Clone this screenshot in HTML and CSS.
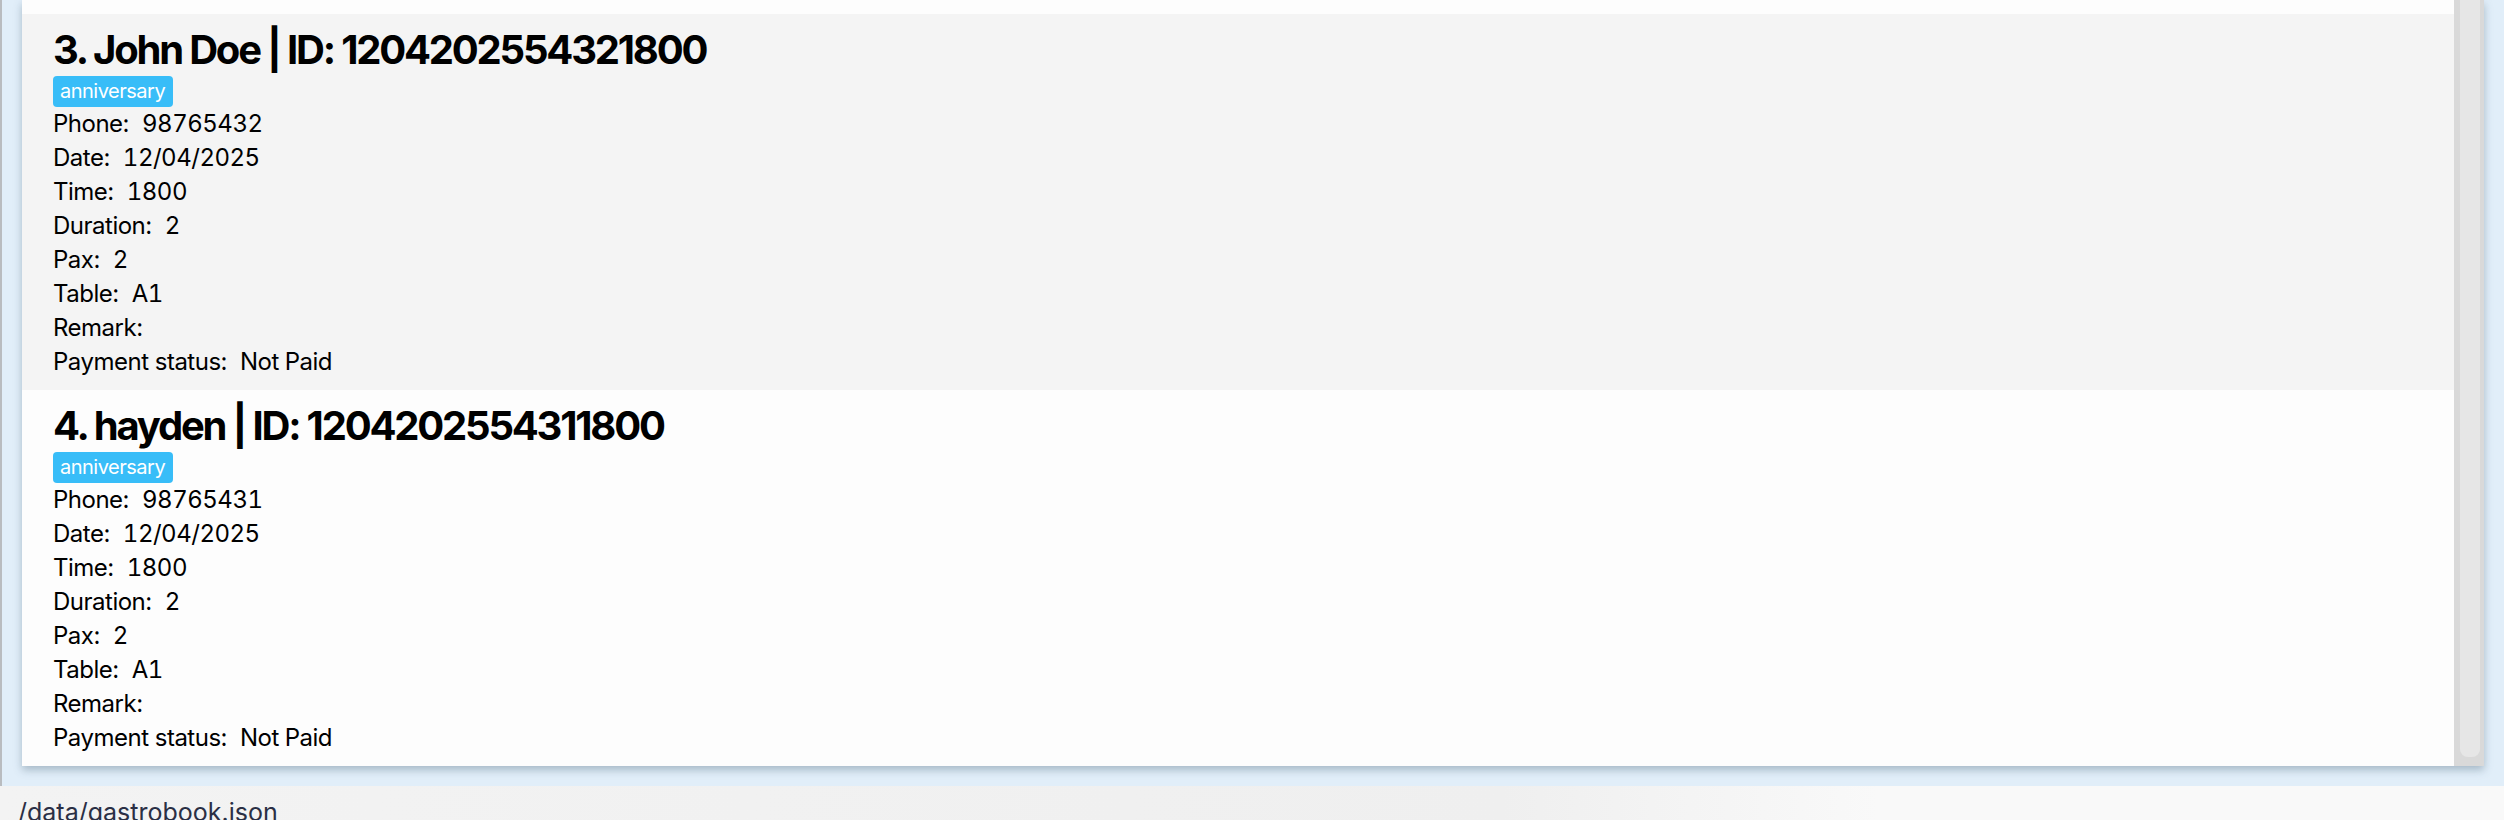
FILE: index.html
```html
<!DOCTYPE html>
<html>
<head>
<meta charset="utf-8">
<link rel="stylesheet" href="styles.css">
</head>
<body>
<div class="app">
  <div class="main">
    <div class="panel">
      <div class="list">
        <div class="card-tail"></div>
        <div class="card card-alt">
          <div class="title">3. John Doe | ID: 1204202554321800</div>
          <div class="tags"><span class="tag">anniversary</span></div>
          <div class="row"><span class="lbl">Phone:</span><span class="val">98765432</span></div>
          <div class="row"><span class="lbl">Date:</span><span class="val">12/04/2025</span></div>
          <div class="row"><span class="lbl">Time:</span><span class="val">1800</span></div>
          <div class="row"><span class="lbl">Duration:</span><span class="val">2</span></div>
          <div class="row"><span class="lbl">Pax:</span><span class="val">2</span></div>
          <div class="row"><span class="lbl">Table:</span><span class="val">A1</span></div>
          <div class="row"><span class="lbl">Remark:</span><span class="val"></span></div>
          <div class="row"><span class="lbl">Payment status:</span><span class="val">Not Paid</span></div>
        </div>
        <div class="card">
          <div class="title">4. hayden | ID: 1204202554311800</div>
          <div class="tags"><span class="tag">anniversary</span></div>
          <div class="row"><span class="lbl">Phone:</span><span class="val">98765431</span></div>
          <div class="row"><span class="lbl">Date:</span><span class="val">12/04/2025</span></div>
          <div class="row"><span class="lbl">Time:</span><span class="val">1800</span></div>
          <div class="row"><span class="lbl">Duration:</span><span class="val">2</span></div>
          <div class="row"><span class="lbl">Pax:</span><span class="val">2</span></div>
          <div class="row"><span class="lbl">Table:</span><span class="val">A1</span></div>
          <div class="row"><span class="lbl">Remark:</span><span class="val"></span></div>
          <div class="row"><span class="lbl">Payment status:</span><span class="val">Not Paid</span></div>
        </div>
      </div>
      <div class="scrollbar"><div class="thumb"></div></div>
    </div>
  </div>
  <div class="status">/data/gastrobook.json</div>
</div>
</body>
</html>
```

FILE: styles.css
```css
html, body {
  margin: 0;
  padding: 0;
}
body {
  width: 2504px;
  height: 820px;
  overflow: hidden;
  font-family: Inter, "Noto Sans", sans-serif;
  color: #000;
}
.app {
  display: flex;
  flex-direction: column;
  height: 820px;
}
.main {
  height: 786px;
  display: flex;
  background: #e1eef9;
  border-left: 2px solid #b9bcc0;
  padding: 0 20px 20px 20px;
  box-sizing: border-box;
}
.panel {
  flex: 1;
  display: flex;
  background: #fdfdfd;
  box-shadow: 0 4px 8px rgba(60, 90, 110, 0.35);
}
.list {
  flex: 1;
  display: flex;
  flex-direction: column;
  overflow: hidden;
}
.card-tail {
  height: 14px;
  background: #fdfdfd;
}
.card {
  height: 376px;
  box-sizing: border-box;
  padding: 12px 0 0 31px;
  background: #fdfdfd;
}
.card-alt {
  background: #f4f4f4;
}
.title {
  font-size: 40px;
  font-weight: 700;
  line-height: 48px;
  letter-spacing: -2.2px;
  margin-bottom: 2px;
}
.tags {
  display: flex;
  height: 31px;
}
.tag {
  background: #38bdf8;
  color: #fff;
  font-size: 20px;
  line-height: 31px;
  padding: 0 8px 0 7px;
  border-radius: 4px;
  letter-spacing: -0.5px;
}
.row {
  font-size: 24px;
  line-height: 34px;
  letter-spacing: -0.5px;
  white-space: pre;
}
.lbl {
  margin-right: 13px;
}
.val {
  font-variant-numeric: tabular-nums;
}
.scrollbar {
  width: 30px;
  background: #d9d9d9;
  display: flex;
  padding: 0 4px 9px 6px;
  box-sizing: border-box;
}
.thumb {
  flex: 1;
  background: #e6e6e6;
  border-radius: 0 0 8px 8px;
}
.status {
  height: 34px;
  background: linear-gradient(90deg, #f3f3f3 0%, #efefef 60%, #f9f9f9 75%, #f9f9f9 100%);
  padding: 11px 0 0 18px;
  box-sizing: border-box;
  font-size: 25px;
  line-height: 30px;
  color: #2a2f45;
  white-space: nowrap;
}
```
